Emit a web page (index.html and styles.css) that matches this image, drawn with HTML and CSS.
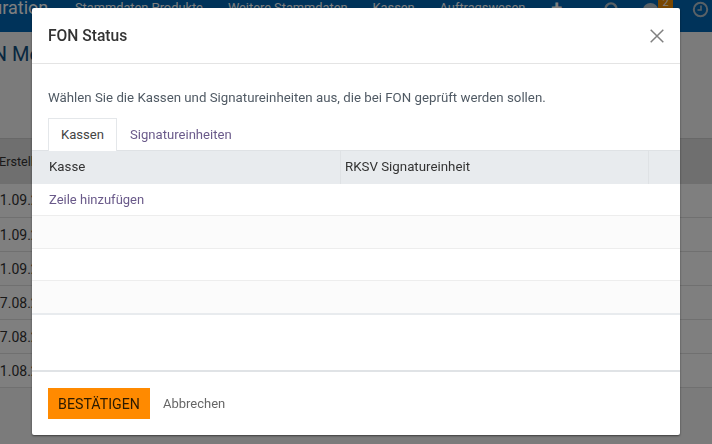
FILE: index.html
```html
<!DOCTYPE html>
<html lang="de">
<head>
<meta charset="utf-8">
<title>FON Status</title>
<link rel="stylesheet" href="styles.css">
</head>
<body>
<div class="page">
  <nav class="nav">
    <span class="brand">Konfiguration</span>
    <span class="nav-item">Stammdaten Produkte</span>
    <span class="nav-item">Weitere Stammdaten</span>
    <span class="nav-item">Kassen</span>
    <span class="nav-item nav-item-last">Auftragswesen</span>
    <span class="nav-plus">+</span>
    <svg class="nav-search" width="18" height="18" viewBox="0 0 18 18"><circle cx="8" cy="7" r="5.6" fill="none" stroke="#b3c2cd" stroke-width="2.4"/><path d="M12 11l4 4" stroke="#b3c2cd" stroke-width="2.6"/></svg>
    <span class="nav-chat"><span class="nav-bubble"></span><span class="nav-badge">2</span></span>
    <svg class="nav-clock" width="17" height="17" viewBox="0 0 17 17"><circle cx="8.5" cy="8.5" r="6.7" fill="none" stroke="#b3c2cd" stroke-width="2"/><path d="M9 4.5v4.5H5.5" fill="none" stroke="#b3c2cd" stroke-width="1.6"/></svg>
  </nav>
  <h1 class="page-title">FON Meldungen</h1>
  <table class="bg-table">
    <thead><tr><th>Erstellt am</th><th class="bg-action">-</th></tr></thead>
    <tbody>
      <tr><td colspan="2">01.09.2020</td></tr>
      <tr><td colspan="2">01.09.2020</td></tr>
      <tr><td colspan="2">01.09.2020</td></tr>
      <tr><td colspan="2">17.08.2020</td></tr>
      <tr><td colspan="2">17.08.2020</td></tr>
      <tr><td colspan="2">01.08.2020</td></tr>
    </tbody>
  </table>
</div>
<div class="backdrop"></div>
<section class="modal">
  <header class="modal-head">
    <h2 class="modal-title">FON Status</h2>
    <svg class="modal-close" width="14" height="14" viewBox="0 0 14 14"><path d="M.7.7l12.6 12.6M13.3.7L.7 13.3" stroke="#808080" stroke-width="1.5" fill="none"/></svg>
  </header>
  <div class="modal-body">
    <p class="intro">Wählen Sie die Kassen und Signatureinheiten aus, die bei FON geprüft werden sollen.</p>
    <div class="tabs">
      <span class="tab tab-active">Kassen</span>
      <span class="tab">Signatureinheiten</span>
    </div>
    <div class="grid">
      <div class="grid-head">
        <div class="cell cell-kasse">Kasse</div>
        <div class="cell cell-rksv">RKSV Signatureinheit</div>
        <div class="cell cell-action"></div>
      </div>
      <div class="grid-row row-a"><span class="add-row">Zeile hinzufügen</span></div>
      <div class="grid-row row-b grid-row-alt"></div>
      <div class="grid-row row-a"></div>
      <div class="grid-row grid-row-alt grid-row-last"></div>
    </div>
  </div>
  <footer class="modal-foot">
    <button class="btn-confirm" type="button">BESTÄTIGEN</button>
    <span class="btn-cancel">Abbrechen</span>
  </footer>
</section>
</body>
</html>
```
FILE: styles.css
```css
* { box-sizing: border-box; }
html, body { margin: 0; padding: 0; height: 100%; overflow: hidden; }
body { font-family: Roboto, "Liberation Sans", sans-serif; background: #f6f6f6; color: #333; }

.page { height: 444px; overflow: hidden; }
.nav { height: 32px; background: #0066b4; display: flex; color: #fff; font-size: 12.8px; position: relative; white-space: nowrap; }
.brand { font-size: 18px; margin-left: -59px; width: 134px; line-height: 16px; flex: none; }
.nav-item { line-height: 16px; margin-right: 25px; }
.nav-item-last { margin-right: 26px; }
.nav-plus { font-size: 20px; line-height: 16px; font-weight: 700; }
.nav-search, .nav-chat, .nav-clock { position: absolute; }
.nav-search { left: 603px; top: 2px; }
.nav-chat { left: 643px; top: 0; }
.nav-bubble { display: block; width: 15px; height: 13px; border-radius: 50%; background: #b3c2cd; margin-top: 3px; }
.nav-badge { position: absolute; left: 15px; top: -5px; width: 15px; height: 15px; background: #f08c00; color: #fff; font-size: 11px; line-height: 15px; text-align: center; }
.nav-clock { left: 692px; top: 1px; }

.page-title { margin: 10px 0 0 -32px; font-size: 20px; line-height: 24px; font-weight: 400; color: #104f80; white-space: nowrap; }
.bg-table { margin: 72px 0 0 -8px; border-collapse: collapse; width: 720px; font-size: 14px; }
.bg-table th { height: 45px; background: #dedede; font-size: 12.6px; font-weight: 400; text-align: left; padding: 0 0 0 7px; border-top: 1px solid #d0d0d0; }
.bg-table .bg-action { width: 44px; padding: 0; }
.bg-table td { height: 34px; padding: 0; background: #fff; border-bottom: 1px solid #e0e0e0; }

.backdrop { position: fixed; inset: 0; background: rgba(0, 0, 0, .5); }

.modal { position: absolute; left: 32px; top: 8px; width: 648px; height: 427px; background: #fff; border-radius: 2px; box-shadow: 0 1px 2px rgba(0, 0, 0, .5); display: flex; flex-direction: column; }
.modal-head { height: 56px; flex: none; display: flex; align-items: center; justify-content: space-between; padding: 1px 16px 0; border-bottom: 1px solid #e4e4e4; }
.modal-title { margin: 0; font-size: 15.6px; font-weight: 500; color: #333; }
.modal-body { flex: 1; display: flex; flex-direction: column; border-bottom: 2px solid #e0e3e6; }
.intro { margin: 25px 16px 0; font-size: 13.27px; line-height: 18px; color: #505a64; }
.tabs { display: flex; margin: 11px 0 0 16px; height: 33px; font-size: 13.1px; }
.tab { padding: 0 13px; line-height: 33px; color: #6a5a8a; }
.tab-active { background: #fff; color: #444; border: 1px solid #e4e7ea; border-bottom: 0; padding: 0 12px; line-height: 32px; position: relative; z-index: 1; height: 33px; }
.grid { margin-top: -1px; font-size: 13.3px; }
.grid-head { display: flex; height: 34px; background: #e8ebee; border-top: 1px solid #dfe2e5; color: #333; }
.cell { padding: 0 0 0 4px; line-height: 32px; border-right: 1px solid #dfe2e5; }
.cell-kasse { width: 309px; padding-left: 17px; }
.cell-rksv { width: 308px; }
.cell-action { flex: 1; border-right: 0; }
.grid-row { border-bottom: 1px solid #ededed; padding-left: 17px; line-height: 31px; }
.row-a { height: 32px; }
.row-b { height: 33px; }
.grid-row-alt { background: #fbfbfb; }
.grid-row-last { border-bottom: 2px solid #e8ebee; height: 34px; }
.add-row { color: #6a5a8a; font-size: 13px; }
.modal-foot { height: 63px; flex: none; display: flex; align-items: center; padding: 0 16px; gap: 13px; }
.btn-confirm { width: 102px; height: 31px; border: 0; padding: 0; background: #ff8a00; color: #2b1a00; font: 400 14.2px Roboto, "Liberation Sans", sans-serif; }
.btn-cancel { font-size: 13px; color: #666; }
```
